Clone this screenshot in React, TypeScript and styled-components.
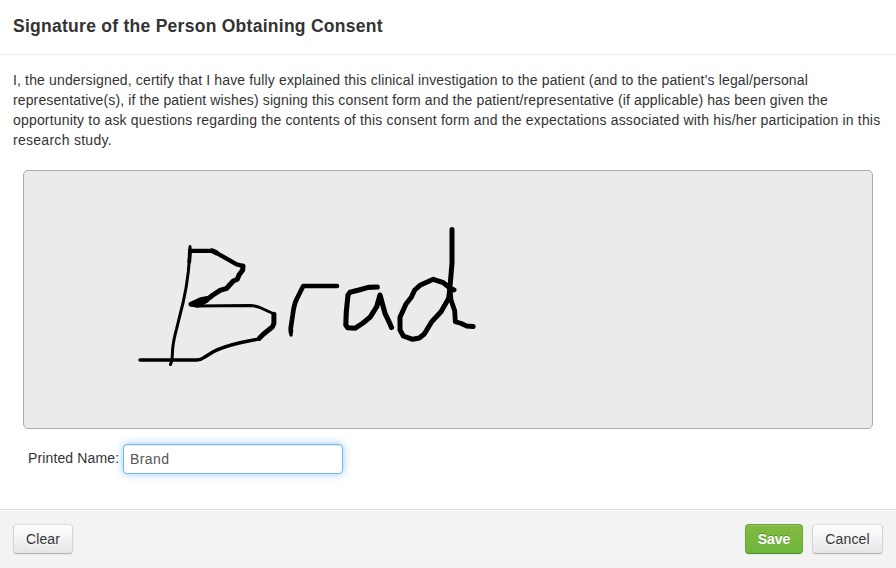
import React, { useState } from "react";
import styled, { createGlobalStyle, css } from "styled-components";

const GlobalStyle = createGlobalStyle`
  *, *::before, *::after { box-sizing: border-box; }
  body {
    margin: 0;
    background: #fff;
    color: #333;
    font: 14px/20px "Liberation Sans", Arial, sans-serif;
  }
`;

const Dialog = styled.form`
  display: flex;
  flex-direction: column;
  height: 568px;
`;

const Header = styled.header`
  flex: none;
  height: 55px;
  padding: 11px 13px 0;
  border-bottom: 1px solid #eee;
`;

const Title = styled.h3`
  margin: 0;
  font-size: 17.5px;
  line-height: 30px;
  font-weight: bold;
  letter-spacing: 0.27px;
`;

const Body = styled.main`
  flex: 1;
  padding: 15px 13px 0;
`;

const Statement = styled.p`
  margin: 0 0 20px;
`;

const Line = styled.span<{ $tracking: number }>`
  display: block;
  white-space: nowrap;
  letter-spacing: ${(p) => p.$tracking}px;
`;

const SignaturePad = styled.div`
  height: 259px;
  margin: 0 10px;
  border: 1px solid #aaa;
  border-radius: 5px;
  background: #ebebeb;
`;

const Ink = styled.svg`
  display: block;
  width: 848px;
  height: 257px;
  fill: none;
  stroke: #000;
  stroke-linecap: round;
  stroke-linejoin: round;
`;

const Field = styled.label`
  display: flex;
  align-items: flex-start;
  margin: 15px 15px 0;
`;

const FieldLabel = styled.span`
  width: 95px;
  padding-top: 4px;
  letter-spacing: 0.13px;
`;

const NameInput = styled.input`
  width: 220px;
  height: 30px;
  padding: 4px 6px;
  border: 1px solid #6fb8f0;
  border-radius: 4px;
  outline: 0;
  background: #fff;
  color: #555;
  font: inherit;
  letter-spacing: 0.4px;
  box-shadow: inset 0 1px 1px rgba(0, 0, 0, 0.075), 0 0 8px rgba(82, 168, 236, 0.6);
`;

const Footer = styled.footer`
  flex: none;
  display: flex;
  align-items: flex-start;
  justify-content: space-between;
  height: 59px;
  padding: 14px 13px 0;
  border-top: 1px solid #ddd;
  background: #f3f3f3;
  box-shadow: inset 0 1px 0 #fff;
`;

const Actions = styled.div`
  display: flex;
  gap: 9px;
`;

const Button = styled.button<{ $primary?: boolean; $width: number }>`
  width: ${(p) => p.$width}px;
  height: 30px;
  padding: 0;
  border: 1px solid;
  border-radius: 4px;
  font: inherit;
  letter-spacing: 0.15px;
  ${(p) =>
    p.$primary
      ? css`
          border-color: #69a436 #69a436 #528a2b;
          background: linear-gradient(#83b941, #6db73c);
          color: #fff;
          font-weight: bold;
          letter-spacing: 0;
          text-shadow: 0 -1px 0 rgba(0, 0, 0, 0.25);
          box-shadow: inset 0 1px 0 rgba(255, 255, 255, 0.2), 0 1px 2px rgba(0, 0, 0, 0.05);
        `
      : css`
          border-color: #dedede #d4d4d4 #b3b3b3;
          background: linear-gradient(#fff, #e6e6e6);
          color: #333;
          text-shadow: 0 1px 1px rgba(255, 255, 255, 0.75);
          box-shadow: inset 0 1px 0 rgba(255, 255, 255, 0.2), 0 1px 2px rgba(0, 0, 0, 0.05);
        `}
`;

const statement: { text: string; tracking: number }[] = [
  {
    text: "I, the undersigned, certify that I have fully explained this clinical investigation to the patient (and to the patient’s legal/personal",
    tracking: 0.149,
  },
  {
    text: "representative(s), if the patient wishes) signing this consent form and the patient/representative (if applicable) has been given the",
    tracking: 0.129,
  },
  {
    text: "opportunity to ask questions regarding the contents of this consent form and the expectations associated with his/her participation in this",
    tracking: 0.182,
  },
  { text: "research study.", tracking: 0.28 },
];

// Pen strokes, split wherever the pen pressure changes.
const strokes: { width: number; d: string }[] = [
  { width: 3, d: "M190 246.5L190 252L188.3 271.7Q186.5 288 183.3 301.7L176.7 328.3Q173.5 340 172.7 348.3L172 360L170.5 364.5" },
  { width: 3.8, d: "M190 250L189.3 262" },
  { width: 4.3, d: "M190 250.8H212.7L236.7 264.3L243 266" },
  { width: 5, d: "M212 250.8L216 252.6M243 266L242.7 270L239 275L237.3 279.3L233.3 281L226.7 288.3L220 290.3L213 295L208.7 298.3L200.7 299.7L191 304.3L198 305L207 300" },
  { width: 3, d: "M196 306L250 305.5Q256 305.7 261 308L274 314" },
  { width: 5, d: "M273.9 314.3V323.5L272.3 327L263.3 334.3L259.3 338.3" },
  { width: 3.5, d: "M259.3 338.9L240 342.7Q222 347 213.3 351.7L204 357.5Q201 360 196.7 360L140 360" },
  { width: 3.4, d: "M291 335L290.7 328.3" },
  { width: 4.7, d: "M290.9 332L290.7 328.3L292.7 315Q294 304 297 298.5L301.7 289L303.3 286H337" },
  { width: 5.1, d: "M377.3 287L368.3 287.4L360 289.7L350 292.3L348 295L346.3 311.7L345.8 325L347.7 327.7L355.3 328.2L363 323L370 317.3L376.7 306.7L380 295L385 313.3L389.3 322.3L391.5 327.5" },
  { width: 5, d: "M452 229.5V263.3L450 286.7L448.7 298.3L441 311.7L431.7 321.7L424.3 334L419.3 338L412.7 339.3L403.3 336L400 330V317.3L406 304L411.3 297.3L414.7 290L420 285.3L433.3 279.3L443.3 282.7L450 288L454 290" },
  { width: 4.8, d: "M450 288.3L451 300L454.7 310.7L455.3 321.7L460.7 323.3L466.7 326L473.3 326.5" },
];

export default function App() {
  const [name, setName] = useState("Brand");
  return (
    <>
      <GlobalStyle />
      <Dialog onSubmit={(e) => e.preventDefault()}>
        <Header>
          <Title>Signature of the Person Obtaining Consent</Title>
        </Header>
        <Body>
          <Statement>
            {statement.map((line) => (
              <Line key={line.text} $tracking={line.tracking}>
                {line.text}
              </Line>
            ))}
          </Statement>
          <SignaturePad>
            <Ink viewBox="24 171 848 257" aria-label="Signature">
              {strokes.map((s) => (
                <path key={s.d} d={s.d} strokeWidth={s.width} />
              ))}
            </Ink>
          </SignaturePad>
          <Field>
            <FieldLabel>Printed Name:</FieldLabel>
            <NameInput value={name} onChange={(e) => setName(e.target.value)} />
          </Field>
        </Body>
        <Footer>
          <Button type="button" $width={60}>Clear</Button>
          <Actions>
            <Button type="submit" $primary $width={58}>Save</Button>
            <Button type="button" $width={71}>Cancel</Button>
          </Actions>
        </Footer>
      </Dialog>
    </>
  );
}
